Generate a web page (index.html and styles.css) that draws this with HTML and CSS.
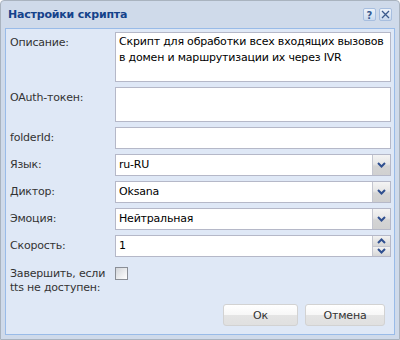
FILE: index.html
```html
<!DOCTYPE html>
<html lang="ru">
<head>
<meta charset="utf-8">
<link rel="stylesheet" href="styles.css">
</head>
<body>
<div class="win">
  <div class="win-header">
    <span class="win-title">Настройки скрипта</span>
    <div class="tools">
      <span class="tool">
        <svg width="11" height="11" viewBox="0 0 11 11"><text x="5.5" y="9.5" text-anchor="middle" class="q">?</text></svg>
      </span>
      <span class="tool">
        <svg width="11" height="11" viewBox="0 0 11 11"><path d="M2 2 L9 9 M9 2 L2 9" stroke="#3b5a8c" stroke-width="1.3" fill="none"/></svg>
      </span>
    </div>
  </div>
  <div class="panel">
    <div class="row">
      <div class="label">Описание:</div>
      <div class="field area">Скрипт для обработки всех входящих вызовов в домен и маршрутизации их через IVR</div>
    </div>
    <div class="row">
      <div class="label">OAuth-токен:</div>
      <div class="field token"></div>
    </div>
    <div class="row">
      <div class="label">folderId:</div>
      <div class="field"></div>
    </div>
    <div class="row">
      <div class="label">Язык:</div>
      <div class="field combo"><span class="val">ru-RU</span><span class="trigger"><svg width="9" height="6" viewBox="0 0 9 6"><path d="M1 1 L4.5 4.5 L8 1" stroke="#2f4f8f" stroke-width="2" fill="none"/></svg></span></div>
    </div>
    <div class="row">
      <div class="label">Диктор:</div>
      <div class="field combo"><span class="val">Oksana</span><span class="trigger"><svg width="9" height="6" viewBox="0 0 9 6"><path d="M1 1 L4.5 4.5 L8 1" stroke="#2f4f8f" stroke-width="2" fill="none"/></svg></span></div>
    </div>
    <div class="row">
      <div class="label">Эмоция:</div>
      <div class="field combo"><span class="val">Нейтральная</span><span class="trigger"><svg width="9" height="6" viewBox="0 0 9 6"><path d="M1 1 L4.5 4.5 L8 1" stroke="#2f4f8f" stroke-width="2" fill="none"/></svg></span></div>
    </div>
    <div class="row">
      <div class="label">Скорость:</div>
      <div class="field combo"><span class="val">1</span><span class="spin"><span class="half"><svg width="9" height="6" viewBox="0 0 9 6"><path d="M1 5 L4.5 1.5 L8 5" stroke="#2f4f8f" stroke-width="2" fill="none"/></svg></span><span class="half"><svg width="9" height="6" viewBox="0 0 9 6"><path d="M1 1 L4.5 4.5 L8 1" stroke="#2f4f8f" stroke-width="2" fill="none"/></svg></span></span></div>
    </div>
    <div class="row">
      <div class="label two">Завершить, если tts не доступен:</div>
      <span class="check"></span>
    </div>
    <div class="buttons">
      <span class="btn ok">Ок</span>
      <span class="btn cancel">Отмена</span>
    </div>
  </div>
</div>
</body>
</html>
```
FILE: styles.css
```css
html, body {
  margin: 0;
  padding: 0;
  background: #ffffff;
}
.win {
  width: 400px;
  height: 340px;
  box-sizing: border-box;
  border: 1px solid #a9b3bf;
  border-radius: 4px 4px 0 0;
  background: #cfdaea;
  padding: 0 4px 4px 4px;
  display: flex;
  flex-direction: column;
  font-family: "DejaVu Sans", sans-serif;
  font-size: 11px;
}
.win-header {
  height: 27px;
  display: flex;
  align-items: center;
  justify-content: space-between;
  padding-left: 3px;
}
.win-title {
  font-weight: bold;
  color: #15428b;
  font-size: 11px;
  letter-spacing: -0.2px;
}
.tools {
  display: flex;
  gap: 3px;
  margin-right: 3px;
  margin-top: 0px;
}
.tool {
  width: 13px;
  height: 13px;
  box-sizing: border-box;
  border: 1px solid #a7bedf;
  border-radius: 2px;
  background: linear-gradient(#eef3fa, #c9d9ee);
  display: flex;
  align-items: center;
  justify-content: center;
}
.q {
  font-family: "DejaVu Sans", sans-serif;
  font-weight: bold;
  font-size: 10px;
  fill: #35598f;
}
.panel {
  flex: 1;
  border: 1px solid #99bbe8;
  background: #dfe8f6;
  display: flex;
  flex-direction: column;
  gap: 5px;
  padding: 3px 3px 8px 4px;
}
.row {
  display: flex;
  align-items: flex-start;
}
.label {
  width: 105px;
  flex: none;
  color: #333333;
  line-height: 16px;
  padding-top: 3px;
  letter-spacing: -0.2px;
}
.label.two {
  line-height: 14px;
  padding-top: 5px;
}
.field {
  flex: 1;
  height: 22px;
  box-sizing: border-box;
  border: 1px solid #b5b8c8;
  background: #ffffff;
  color: #000000;
  line-height: 20px;
  padding: 0 3px;
  letter-spacing: -0.2px;
}
.area {
  height: 50px;
  line-height: 16px;
  padding-top: 1px;
}
.token {
  height: 35px;
}
.combo {
  display: flex;
  padding-right: 0;
}
.val {
  flex: 1;
}
.trigger, .spin {
  width: 17px;
  border-left: 1px solid #c4c6d0;
  background: linear-gradient(#f4f4f4 0%, #e6e6e6 45%, #d4d4d4 55%, #d0d0d0 100%);
  display: flex;
  align-items: center;
  justify-content: center;
}
.spin {
  flex-direction: column;
  background: none;
}
.half {
  flex: 1;
  width: 100%;
  display: flex;
  align-items: center;
  justify-content: center;
  background: linear-gradient(#f2f2f2, #d6d6d6);
}
.half + .half {
  border-top: 1px solid #c4c6d0;
}
.check {
  margin-top: 5px;
  width: 13px;
  height: 13px;
  box-sizing: border-box;
  border: 1px solid #8a8e96;
  background: linear-gradient(135deg, #d2d5da, #ffffff);
}
.buttons {
  margin-top: auto;
  display: flex;
  justify-content: flex-end;
  gap: 7px;
  margin-right: 6px;
}
.btn {
  height: 22px;
  box-sizing: border-box;
  border: 1px solid #d2d2d2;
  border-radius: 3px;
  background: linear-gradient(#ffffff 0%, #f7f7f7 48%, #e4e4e4 52%, #e0e0e0 100%);
  color: #333333;
  display: flex;
  align-items: center;
  justify-content: center;
  letter-spacing: -0.2px;
}
.ok { width: 75px; }
.cancel { width: 80px; }
```
